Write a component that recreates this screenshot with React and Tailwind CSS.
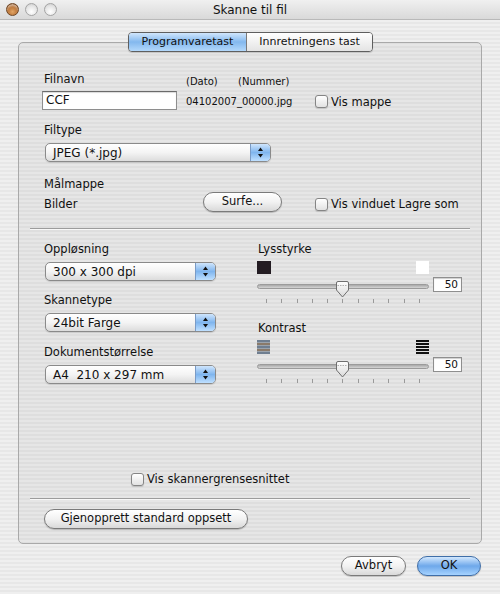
import { useState } from "react";

const stripes =
  "bg-[repeating-linear-gradient(to_bottom,#efefef_0px,#efefef_2px,#e7e7e7_2px,#e7e7e7_4px)]";

function Light({ active }) {
  return active ? (
    <div className="h-[13px] w-[13px] rounded-full border border-[#6e4625] bg-[radial-gradient(circle_at_50%_70%,#e2a565_0%,#b36b2e_60%,#7c4a22_100%)] shadow-[inset_0_2px_2px_rgba(255,255,255,0.5)]" />
  ) : (
    <div className="h-[13px] w-[13px] rounded-full border border-[#a4a4a4] bg-[radial-gradient(circle_at_50%_70%,#ffffff_0%,#e4e4e4_60%,#c4c4c4_100%)]" />
  );
}

function Arrows() {
  return (
    <svg width="7" height="11" viewBox="0 0 7 11">
      <path d="M3.5 0.5 L6 4 H1 Z" fill="#111" />
      <path d="M3.5 10.5 L6 7 H1 Z" fill="#111" />
    </svg>
  );
}

function Popup({ label, w }) {
  return (
    <div className={`flex h-[19px] ${w} items-center rounded-[5px] border border-[#8a8a8a] bg-gradient-to-b from-white via-[#f4f4f4] to-[#dcdcdc] shadow-[0_1px_1px_rgba(0,0,0,0.12)]`}>
      <span className="flex-1 whitespace-pre pl-[7px] text-[12px] leading-none">{label}</span>
      <div className="flex h-full w-[20px] items-center justify-center rounded-r-[4px] border-l border-[#7a9bc6] bg-gradient-to-b from-[#cfe5fc] via-[#7fb5ee] to-[#bfe0ff]">
        <Arrows />
      </div>
    </div>
  );
}

function Check({ label }) {
  const [on, setOn] = useState(false);
  return (
    <label className="flex cursor-default items-center gap-[3px]" onClick={() => setOn(!on)}>
      <span className="h-[13px] w-[13px] rounded-[3px] border border-[#858585] bg-gradient-to-b from-white to-[#e2e2e2] shadow-[0_1px_1px_rgba(0,0,0,0.15)]">
        {on && <span className="block text-center text-[10px] leading-[11px]">✓</span>}
      </span>
      <span className="text-[11.5px] leading-[14px]">{label}</span>
    </label>
  );
}

function Button({ label, w, primary }) {
  return (
    <button
      className={`flex h-[20px] ${w} items-center justify-center rounded-full border text-[11.5px] leading-none shadow-[0_1px_1px_rgba(0,0,0,0.2)] ${
        primary
          ? "border-[#3f6ea8] bg-gradient-to-b from-[#d3e8fd] via-[#6ea8ea] to-[#a6d3ff]"
          : "border-[#7a7a7a] bg-gradient-to-b from-white via-[#f2f2f2] to-[#d9d9d9]"
      }`}
    >
      {label}
    </button>
  );
}

function Slider({ value }) {
  return (
    <div className="flex h-[30px] items-start">
      <div className="relative h-[30px] w-[172px]">
        <div className="absolute left-0 right-0 top-[8px] h-[5px] rounded-full border border-[#9b9b9b] bg-gradient-to-b from-[#a9a9a9] to-[#d4d4d4]" />
        <svg className="absolute left-[78px] top-[5px]" width="15" height="17" viewBox="0 0 15 17">
          <defs>
            <linearGradient id="kn" x1="0" y1="0" x2="0" y2="1">
              <stop offset="0" stopColor="#ffffff" />
              <stop offset="1" stopColor="#d8d8d8" />
            </linearGradient>
          </defs>
          <path d="M1.5 2 Q1.5 0.5 3 0.5 H12 Q13.5 0.5 13.5 2 V9 L7.5 16 L1.5 9 Z" fill="url(#kn)" stroke="#6f6f6f" />
          <path d="M2.5 4.5 H12.5" stroke="#b0b0b0" strokeDasharray="1.5 1" />
        </svg>
        <div className="absolute left-[9px] top-[23px] flex w-[154px] justify-between">
          {Array.from({ length: 11 }).map((_, i) => (
            <div key={i} className="h-[4px] w-px bg-[#9a9a9a]" />
          ))}
        </div>
      </div>
      <div className="ml-[4px] mt-[1px] flex h-[15px] w-[29px] items-center justify-end border border-[#8e8e8e] bg-white pr-[3px] text-[10.5px] leading-none shadow-[inset_0_1px_1px_rgba(0,0,0,0.2)]">
        {value}
      </div>
    </div>
  );
}

function LowContrast() {
  return (
    <svg width="13" height="14" viewBox="0 0 13 14">
      {[0, 3, 6, 9, 12].map((y, i) => (
        <rect key={y} x="0" y={y} width="13" height="2" fill={i % 2 ? "#8a7a6a" : "#6f7e90"} />
      ))}
      {[2, 5, 8, 11].map((y) => (
        <rect key={y} x="0" y={y} width="13" height="1" fill="#9aa3ad" />
      ))}
    </svg>
  );
}

function HighContrast() {
  return (
    <svg width="13" height="14" viewBox="0 0 13 14">
      {[0, 3, 6, 9, 12].map((y) => (
        <rect key={y} x="0" y={y} width="13" height="2" fill="#111" />
      ))}
    </svg>
  );
}

export default function App() {
  const [tab, setTab] = useState(0);
  return (
    <div className={`flex h-[594px] w-[500px] flex-col overflow-hidden font-['DejaVu_Sans',sans-serif] text-[#111] ${stripes}`}>
      {/* title bar */}
      <div className="relative flex h-[20px] items-center border-b border-[#b9b9b9] bg-gradient-to-b from-[#f0f0f0] to-[#d9d9d9]">
        <div className="ml-[6px] flex gap-[6px]">
          <Light active />
          <Light />
          <Light />
        </div>
        <div className="absolute inset-0 flex items-center justify-center text-[12px]">Skanne til fil</div>
      </div>

      {/* tab box */}
      <div className="relative mx-[18px] mt-[22px] flex h-[502px] flex-col rounded-[5px] border border-[#a9a9a9] bg-black/[0.035] px-px">
        <div className="absolute left-[109px] top-[-11px] flex h-[20px] overflow-hidden rounded-[4px] border border-[#5f5f5f] text-[11px] shadow-[0_1px_1px_rgba(0,0,0,0.15)]">
          <button
            onClick={() => setTab(0)}
            className={`w-[117px] ${tab === 0 ? "bg-gradient-to-b from-[#d0e6fc] via-[#83b8ee] to-[#b3d8fb]" : "bg-gradient-to-b from-white to-[#e4e4e4]"}`}
          >
            Programvaretast
          </button>
          <button
            onClick={() => setTab(1)}
            className={`w-[126px] border-l border-[#7a7a7a] ${tab === 1 ? "bg-gradient-to-b from-[#d0e6fc] via-[#83b8ee] to-[#b3d8fb]" : "bg-gradient-to-b from-white to-[#e4e4e4]"}`}
          >
            Innretningens tast
          </button>
        </div>

        {/* section 1 */}
        <div className="mt-[29px] flex h-[16px] pl-[24px]">
          <div className="w-[142px] text-[11.5px] leading-[14px]">Filnavn</div>
          <div className="flex self-end text-[10px] leading-[12px]">
            <span className="w-[52px]">(Dato)</span>
            <span>(Nummer)</span>
          </div>
        </div>
        <div className="flex h-[24px] items-center pl-[22px]">
          <div className="flex h-[19px] w-[135px] items-center border border-[#8e8e8e] border-t-[#6a6a6a] bg-white pl-[3px] text-[12px] shadow-[inset_0_1px_1px_rgba(0,0,0,0.15)]">
            CCF
          </div>
          <div className="ml-[9px] mt-[3px] w-[129px] text-[10px] leading-[12px]">04102007_00000.jpg</div>
          <div className="mt-[3px]">
            <Check label="Vis mappe" />
          </div>
        </div>

        <div className="mt-[11px] pl-[24px] text-[11.5px] leading-[14px]">Filtype</div>
        <div className="mt-[6px] pl-[25px]">
          <Popup label="JPEG (*.jpg)" w="w-[226px]" />
        </div>

        <div className="mt-[15px] pl-[24px] text-[11.5px] leading-[14px]">Målmappe</div>
        <div className="flex h-[22px] items-center pl-[24px]">
          <span className="mt-[3px] w-[159px] text-[11.5px] leading-[14px]">Bilder</span>
          <Button label="Surfe..." w="w-[79px]" />
          <div className="ml-[33px] mt-[4px]">
            <Check label="Vis vinduet Lagre som" />
          </div>
        </div>

        <div className="mx-[10px] mt-[15px] h-px bg-[#9c9c9c] shadow-[0_1px_0_#f8f8f8]" />

        {/* section 2 */}
        <div className="flex pl-[24px]">
          <div className="w-[213px]">
            <div className="mt-[13px] text-[11.5px] leading-[14px]">Oppløsning</div>
            <div className="ml-px mt-[6px]">
              <Popup label="300 x 300 dpi" w="w-[171px]" />
            </div>
            <div className="mt-[12px] text-[11.5px] leading-[14px]">Skannetype</div>
            <div className="ml-px mt-[6px]">
              <Popup label="24bit Farge" w="w-[171px]" />
            </div>
            <div className="mt-[13px] text-[11.5px] leading-[14px]">Dokumentstørrelse</div>
            <div className="ml-px mt-[6px]">
              <Popup label="A4  210 x 297 mm" w="w-[171px]" />
            </div>
          </div>
          <div className="flex w-[205px] flex-col">
            <div className="ml-px mt-[13px] text-[11.5px] leading-[14px]">Lysstyrke</div>
            <div className="mt-[5px] flex h-[13px] w-[172px] justify-between">
              <div className="h-[13px] w-[14px] bg-[#231c22]" />
              <div className="h-[13px] w-[13px] bg-white" />
            </div>
            <div className="mt-[2px]">
              <Slider value="50" />
            </div>
            <div className="ml-px mt-[15px] text-[11.5px] leading-[14px]">Kontrast</div>
            <div className="mt-[5px] flex h-[14px] w-[172px] justify-between">
              <LowContrast />
              <HighContrast />
            </div>
            <div className="mt-[2px]">
              <Slider value="50" />
            </div>
          </div>
        </div>

        {/* bottom of box */}
        <div className="mt-auto pl-[111px]">
          <Check label="Vis skannergrensesnittet" />
        </div>
        <div className="mx-[10px] mt-[12px] h-px bg-[#9c9c9c] shadow-[0_1px_0_#f8f8f8]" />
        <div className="mb-[14px] mt-[10px] pl-[24px]">
          <Button label="Gjenopprett standard oppsett" w="w-[204px]" />
        </div>
      </div>

      {/* dialog buttons */}
      <div className="mt-[12px] flex justify-end gap-[11px] pr-[19px]">
        <Button label="Avbryt" w="w-[65px]" />
        <Button label="OK" w="w-[64px]" primary />
      </div>
    </div>
  );
}
